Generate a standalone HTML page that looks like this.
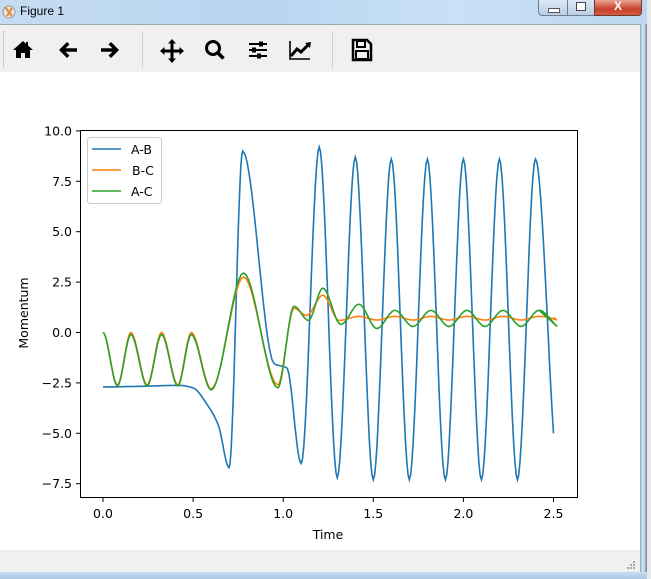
<!DOCTYPE html>
<html><head><meta charset="utf-8"><style>
body{margin:0;width:651px;height:579px;overflow:hidden;background:#e8e8e8;font-family:"DejaVu Sans","Liberation Sans",sans-serif;position:relative}
.title{position:absolute;left:0;top:0;width:647px;height:24px;background:linear-gradient(90deg,#c5dcf2,#b9d5f2 40%,#c9e0f7 70%,#bcd6f0);}
.title span{position:absolute;left:20px;top:4px;font-size:12px;font-family:"Liberation Sans",sans-serif;color:#000}
.tb{position:absolute;left:0;top:24px;width:640px;height:47px;background:#f0f0f0;border-bottom:1px solid #c8c8c8;border-top:1px solid #9aa}
.canvas{position:absolute;left:0;top:72px;width:640px;height:478px;background:#fff}
.status{position:absolute;left:0;top:550px;width:640px;height:22px;background:#f0f0f0}
.frame{position:absolute;left:640px;top:24px;width:7px;height:555px;background:linear-gradient(90deg,#8aa,#cfe3f7,#b7d0ea,#777)}
.bottom{position:absolute;left:0;top:572px;width:647px;height:7px;background:linear-gradient(#c9def3,#a9c5e3)}
.ic{position:absolute;top:38px}
</style></head><body>
<div class="title"><span>Figure 1</span>
<svg style="position:absolute;left:1px;top:3px" width="16" height="17"><circle cx="8" cy="9" r="6" fill="#e9e4d8" stroke="#999"/><path d="M4 4 L11 13 M11 5 L6 13" stroke="#d84" stroke-width="2"/></svg>
<div style="position:absolute;left:538px;top:0;width:28px;height:15px;border:1px solid #6c7e94;border-top:none;border-radius:0 0 0 4px;background:linear-gradient(#dce8f5,#b9cde3)"><div style="position:absolute;left:9px;top:8px;width:10px;height:3px;background:#fff;border:1px solid #556"></div></div>
<div style="position:absolute;left:567px;top:0;width:26px;height:15px;border:1px solid #6c7e94;border-top:none;background:linear-gradient(#dce8f5,#b9cde3)"><div style="position:absolute;left:8px;top:2px;width:8px;height:7px;border:1px solid #445;background:#fff"></div></div>
<div style="position:absolute;left:594px;top:0;width:46px;height:15px;border:1px solid #6b3a33;border-top:none;border-radius:0 0 4px 0;background:linear-gradient(#e8a493,#c8412b 60%,#d25a3f);color:#fff;font:bold 12px 'Liberation Sans';text-align:center;line-height:13px">X</div>
</div>
<div class="tb">
<div style="position:absolute;left:3px;top:6px;height:36px;border-left:1px dotted #aaa"></div>
<div style="position:absolute;left:142px;top:6px;height:37px;border-left:1px solid #d0d0d0"></div>
<div style="position:absolute;left:332px;top:6px;height:37px;border-left:1px solid #d0d0d0"></div>
</div>
<svg class="ic" style="left:11px" width="24" height="24" viewBox="0 0 24 24"><path d="M12 3 L2 12 L5 12 L5 20 L10 20 L10 15 L14 15 L14 20 L19 20 L19 12 L22 12 L17 7.5 L17 4 L15 4 L15 5.8 Z" fill="#000"/></svg>
<svg class="ic" style="left:56px" width="24" height="24" viewBox="0 0 24 24"><path d="M3 12 L11 4 L13.5 6.5 L9.5 10.2 L21 10.2 L21 13.8 L9.5 13.8 L13.5 17.5 L11 20 Z" fill="#000"/></svg>
<svg class="ic" style="left:98px" width="24" height="24" viewBox="0 0 24 24"><path d="M21 12 L13 4 L10.5 6.5 L14.5 10.2 L3 10.2 L3 13.8 L14.5 13.8 L10.5 17.5 L13 20 Z" fill="#000"/></svg>
<svg class="ic" style="left:159px" width="26" height="26" viewBox="0 0 26 26"><path d="M13 1 L17 5.5 L14.5 5.5 L14.5 11.5 L20.5 11.5 L20.5 9 L25 13 L20.5 17 L20.5 14.5 L14.5 14.5 L14.5 20.5 L17 20.5 L13 25 L9 20.5 L11.5 20.5 L11.5 14.5 L5.5 14.5 L5.5 17 L1 13 L5.5 9 L5.5 11.5 L11.5 11.5 L11.5 5.5 L9 5.5 Z" fill="#000"/></svg>
<svg class="ic" style="left:203px" width="24" height="24" viewBox="0 0 24 24"><circle cx="10" cy="10" r="6.5" fill="none" stroke="#000" stroke-width="3"/><path d="M14.5 14.5 L20.5 20.5" stroke="#000" stroke-width="3.5"/></svg>
<svg class="ic" style="left:246px" width="24" height="24" viewBox="0 0 24 24"><path d="M3 6h18M3 12h18M3 18h18" stroke="#000" stroke-width="2"/><rect x="13" y="3.5" width="4" height="5" fill="#000"/><rect x="6" y="9.5" width="4" height="5" fill="#000"/><rect x="11" y="15.5" width="4" height="5" fill="#000"/></svg>
<svg class="ic" style="left:288px" width="26" height="24" viewBox="0 0 26 24"><path d="M2 3 L2 21 L22 21" fill="none" stroke="#000" stroke-width="1.6"/><path d="M3 18 L9 11 L13 14 L20 7" fill="none" stroke="#000" stroke-width="3"/><path d="M17 5 L23 4 L22 10 Z" fill="#000"/></svg>
<svg class="ic" style="left:350px" width="24" height="24" viewBox="0 0 24 24"><path d="M3 2 L17 2 L21 6 L21 22 L3 22 Z" fill="none" stroke="#000" stroke-width="2.5"/><rect x="7" y="3" width="8" height="6" fill="none" stroke="#000" stroke-width="2"/><rect x="6" y="13" width="12" height="8" fill="none" stroke="#000" stroke-width="2"/></svg>
<div class="canvas"></div>
<div class="status"><svg style="position:absolute;left:626px;top:10px" width="10" height="10"><g fill="#aaa"><rect x="7" y="1" width="2" height="2"/><rect x="4" y="4" width="2" height="2"/><rect x="7" y="4" width="2" height="2"/><rect x="1" y="7" width="2" height="2"/><rect x="4" y="7" width="2" height="2"/><rect x="7" y="7" width="2" height="2"/></g></svg></div>
<div class="frame"></div>
<div class="bottom"></div>
<svg id="plot" style="position:absolute;left:0;top:0" width="640" height="579" font-size="12.5" font-family="DejaVu Sans,Liberation Sans,sans-serif">
<g id="curves"></g>
<rect x="80.5" y="130.5" width="497" height="367" fill="none" stroke="#000" stroke-width="1"/>
<g id="ticks" stroke="#000"></g>
<g id="labels" fill="#000"></g>
<text x="328" y="539" text-anchor="middle">Time</text>
<text transform="translate(28,313) rotate(-90)" text-anchor="middle">Momentum</text>
<rect x="87.5" y="137.5" width="74" height="66" rx="3" fill="#fff" fill-opacity="0.8" stroke="#ccc"/>
<path d="M92 149h29" stroke="#1f77b4" stroke-width="1.6"/><text x="131" y="154">A-B</text>
<path d="M92 170h29" stroke="#ff7f0e" stroke-width="1.6"/><text x="132" y="175">B-C</text>
<path d="M92 191h29" stroke="#2ca02c" stroke-width="1.6"/><text x="131" y="196">A-C</text>
</svg>
<script>
var X=function(t){return 103+t*180.2},Y=function(v){return 332.5-v*20.16};
function path(k){
 var n=k.length,d=[],m=[];
 for(var i=0;i<n-1;i++)d.push((k[i+1][1]-k[i][1])/(k[i+1][0]-k[i][0]));
 for(var i=0;i<n;i++){
  if(i==0)m.push(0);else if(i==n-1)m.push(d[n-2]);
  else if(d[i-1]*d[i]<=0)m.push(0);
  else{var a=d[i-1],b=d[i];m.push(2*a*b/(a+b));}
 }
 var s='';
 for(var i=0;i<n-1;i++){var x0=k[i][0],x1=k[i+1][0],h=x1-x0,y0=k[i][1],y1=k[i+1][1];
  for(var j=0;j<=14;j++){var u=j/14,h00=2*u*u*u-3*u*u+1,h10=u*u*u-2*u*u+u,h01=-2*u*u*u+3*u*u,h11=u*u*u-u*u;
   var v=h00*y0+h10*h*m[i]+h01*y1+h11*h*m[i+1],t=x0+u*h;
   s+=(s?'L':'M')+X(t).toFixed(1)+' '+Y(v).toFixed(1);}}
 return s;}
var blue=[[0,-2.7],[0.25,-2.66],[0.42,-2.62],[0.5,-2.75],[0.58,-3.6],[0.64,-4.6],[0.7,-6.7],[0.775,9.0],[0.95,-1.55],[1.02,-1.75],[1.1,-6.5],[1.2,9.2],[1.3,-7.2],[1.4,8.7]];
for(var i=0;i<5;i++){blue.push([1.5+i*0.2,-7.3]);blue.push([1.6+i*0.2,8.6]);}blue.push([2.5,-5]);
var orange=[[0,0],[0.08,-2.6],[0.155,0],[0.245,-2.6],[0.325,0],[0.415,-2.6],[0.49,0],[0.6,-2.8],[0.78,2.75],[0.97,-2.6],[1.06,1.2],[1.13,0.85],[1.22,1.85],[1.31,0.6]];
for(var i=0;i<6;i++){orange.push([1.42+i*0.2,0.8]);orange.push([1.52+i*0.2,0.62]);}orange.push([2.5,0.75]);
var green=[[0,0],[0.08,-2.65],[0.155,-0.1],[0.245,-2.65],[0.325,-0.1],[0.415,-2.65],[0.49,-0.1],[0.6,-2.85],[0.78,2.95],[0.97,-2.75],[1.06,1.3],[1.14,0.6],[1.22,2.2],[1.32,0.4],[1.42,1.4],[1.52,0.2],[1.62,1.1],[1.72,0.3]];
for(var i=0;i<4;i++){green.push([1.82+i*0.2,1.1]);green.push([1.92+i*0.2,0.3]);}green.push([2.42,1.1]);green.push([2.5,0.5]);
var g=document.getElementById('curves');
[[blue,'#1f77b4'],[orange,'#ff7f0e'],[green,'#2ca02c']].forEach(function(c){var p=document.createElementNS('http://www.w3.org/2000/svg','path');p.setAttribute('d',path(c[0]));p.setAttribute('fill','none');p.setAttribute('stroke',c[1]);p.setAttribute('stroke-width','1.6');g.appendChild(p);});
var tk=document.getElementById('ticks'),lb=document.getElementById('labels'),h='',l='';
for(var i=0;i<=5;i++){var x=X(i*0.5);h+='<path d="M'+x+' 498v4"/>';l+='<text x="'+x+'" y="518" text-anchor="middle">'+(i*0.5).toFixed(1)+'</text>';}
for(var i=0;i<8;i++){var v=10-i*2.5,y=Y(v);h+='<path d="M76 '+y+'h4"/>';l+='<text x="72" y="'+(y+4.5)+'" text-anchor="end">'+(v<0?'\u2212'+(-v).toFixed(1):v.toFixed(1))+'</text>';}
tk.innerHTML=h;lb.innerHTML=l;
</script>
</body></html>
